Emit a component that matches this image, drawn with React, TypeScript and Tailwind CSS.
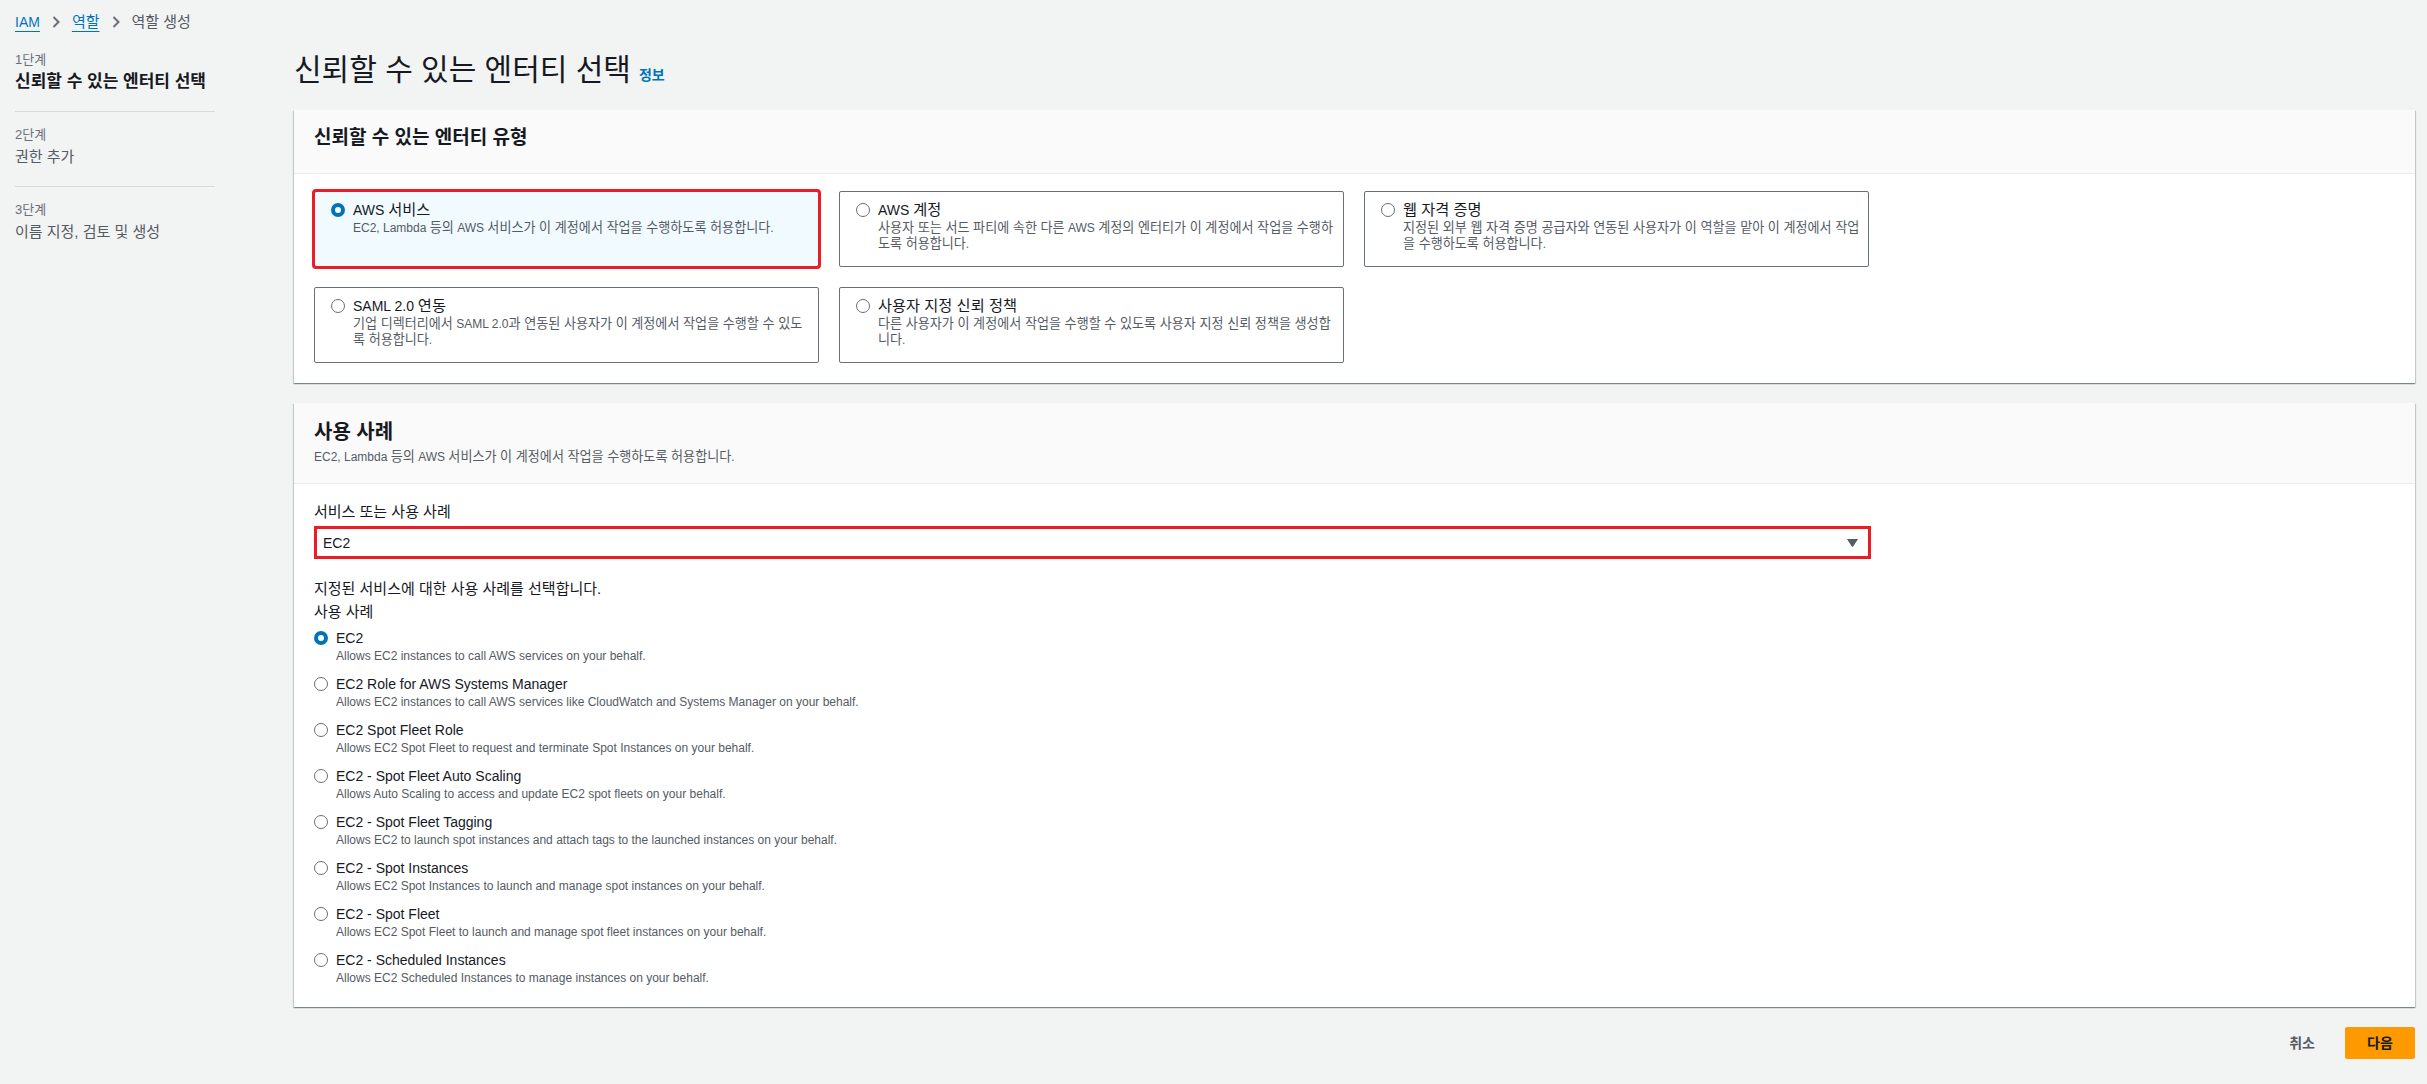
import React from 'react'

const tiles = [
  {
    title: 'AWS 서비스',
    lines: ['EC2, Lambda 등의 AWS 서비스가 이 계정에서 작업을 수행하도록 허용합니다.'],
    selected: true,
  },
  {
    title: 'AWS 계정',
    lines: [
      '사용자 또는 서드 파티에 속한 다른 AWS 계정의 엔터티가 이 계정에서 작업을 수행하',
      '도록 허용합니다.',
    ],
  },
  {
    title: '웹 자격 증명',
    lines: [
      '지정된 외부 웹 자격 증명 공급자와 연동된 사용자가 이 역할을 맡아 이 계정에서 작업',
      '을 수행하도록 허용합니다.',
    ],
  },
  {
    title: 'SAML 2.0 연동',
    lines: [
      '기업 디렉터리에서 SAML 2.0과 연동된 사용자가 이 계정에서 작업을 수행할 수 있도',
      '록 허용합니다.',
    ],
  },
  {
    title: '사용자 지정 신뢰 정책',
    lines: [
      '다른 사용자가 이 계정에서 작업을 수행할 수 있도록 사용자 지정 신뢰 정책을 생성합',
      '니다.',
    ],
  },
]

const useCases = [
  { title: 'EC2', desc: 'Allows EC2 instances to call AWS services on your behalf.' },
  {
    title: 'EC2 Role for AWS Systems Manager',
    desc: 'Allows EC2 instances to call AWS services like CloudWatch and Systems Manager on your behalf.',
  },
  {
    title: 'EC2 Spot Fleet Role',
    desc: 'Allows EC2 Spot Fleet to request and terminate Spot Instances on your behalf.',
  },
  {
    title: 'EC2 - Spot Fleet Auto Scaling',
    desc: 'Allows Auto Scaling to access and update EC2 spot fleets on your behalf.',
  },
  {
    title: 'EC2 - Spot Fleet Tagging',
    desc: 'Allows EC2 to launch spot instances and attach tags to the launched instances on your behalf.',
  },
  {
    title: 'EC2 - Spot Instances',
    desc: 'Allows EC2 Spot Instances to launch and manage spot instances on your behalf.',
  },
  {
    title: 'EC2 - Spot Fleet',
    desc: 'Allows EC2 Spot Fleet to launch and manage spot fleet instances on your behalf.',
  },
  {
    title: 'EC2 - Scheduled Instances',
    desc: 'Allows EC2 Scheduled Instances to manage instances on your behalf.',
  },
]

// hangul runs render a bit larger so they line up with the console font
function Ko({ text }: { text: string }) {
  const parts = text.split(/([\uAC00-\uD7A3]+(?:[ ,.]*[\uAC00-\uD7A3]+)*)/)
  return (
    <>
      {parts.map((p, i) =>
        /[\uAC00-\uD7A3]/.test(p) ? (
          <span key={i} className="text-[1.09em]">
            {p}
          </span>
        ) : (
          <React.Fragment key={i}>{p}</React.Fragment>
        ),
      )}
    </>
  )
}

function Radio({ checked }: { checked?: boolean }) {
  return checked ? (
    <span className="mt-[3px] box-border size-[14px] shrink-0 rounded-full border-[4px] border-[#0073bb] bg-white" />
  ) : (
    <span className="mt-[3px] box-border size-[14px] shrink-0 rounded-full border-[1.5px] border-[#687078] bg-white" />
  )
}

function Chevron() {
  return (
    <svg width="8" height="12" viewBox="0 0 8 12" className="mx-3">
      <polyline points="1.5,1 6.5,6 1.5,11" fill="none" stroke="#687078" strokeWidth="2" />
    </svg>
  )
}

const cardShadow =
  'shadow-[0_1px_1px_0_rgba(0,28,36,0.3),1px_1px_1px_0_rgba(0,28,36,0.15),-1px_1px_1px_0_rgba(0,28,36,0.15)]'

export default function App() {
  return (
    <div className="min-h-screen bg-[#f2f3f3] pl-[15px] pr-[12px] pt-3 pb-6 font-['Liberation_Sans','Noto_Sans_CJK_KR',sans-serif] text-[#16191f]">
      {/* breadcrumb */}
      <nav className="flex h-5 items-center text-[14px] leading-5">
        <span className="text-[#0073bb] underline underline-offset-4">IAM</span>
        <Chevron />
        <span className="text-[15px] text-[#0073bb] underline underline-offset-4">역할</span>
        <Chevron />
        <span className="text-[15px] text-[#545b64]">역할 생성</span>
      </nav>

      <div className="mt-5 flex">
        {/* steps */}
        <aside className="w-[200px] shrink-0">
          <div>
            <div className="text-[13px] leading-4 text-[#687078]">1단계</div>
            <div className="mt-1 text-[17px] font-bold leading-5">신뢰할 수 있는 엔터티 선택</div>
          </div>
          <div className="mt-[19px] mb-[15px] border-t border-[#d5dbdb]" />
          <div>
            <div className="text-[13px] leading-4 text-[#687078]">2단계</div>
            <div className="mt-1 text-[15px] leading-5 text-[#545b64]">권한 추가</div>
          </div>
          <div className="mt-[19px] mb-[15px] border-t border-[#d5dbdb]" />
          <div>
            <div className="text-[13px] leading-4 text-[#687078]">3단계</div>
            <div className="mt-1 text-[15px] leading-5 text-[#545b64]">이름 지정, 검토 및 생성</div>
          </div>
        </aside>

        <main className="ml-[79px] flex-1">
          <h1 className="flex h-9 items-baseline text-[30px] leading-9 font-normal">
            신뢰할 수 있는 엔터티 선택
            <span className="ml-2 text-[14px] font-bold text-[#0073bb]">정보</span>
          </h1>

          {/* trusted entity type */}
          <section className={`mt-[22px] bg-white ${cardShadow}`}>
            <div className="border-b border-[#eaeded] bg-[#fafafa] px-5 pt-4 pb-[23px]">
              <h2 className="text-[19px] font-bold leading-6">신뢰할 수 있는 엔터티 유형</h2>
            </div>
            <div className="grid grid-cols-[repeat(3,505px)] gap-5 px-5 pt-[17px] pb-5">
              {tiles.map((t) => (
                <div
                  key={t.title}
                  className={
                    t.selected
                      ? 'flex h-[76px] gap-2 rounded-[2px] border border-[#0073bb] bg-[#f1faff] px-4 pt-2 outline-solid outline-[3px] outline-[#ed1c24] outline-offset-[-1px]'
                      : 'flex h-[76px] gap-2 rounded-[2px] border border-[#687078] bg-white px-4 pt-2'
                  }
                >
                  <Radio checked={t.selected} />
                  <div>
                    <div className="text-[14px] leading-5">
                      <Ko text={t.title} />
                    </div>
                    {t.lines.map((l) => (
                      <div key={l} className="whitespace-nowrap text-[12px] leading-4 text-[#545b64]">
                        <Ko text={l} />
                      </div>
                    ))}
                  </div>
                </div>
              ))}
            </div>
          </section>

          {/* use case */}
          <section className={`mt-5 bg-white ${cardShadow}`}>
            <div className="border-b border-[#eaeded] bg-[#fafafa] px-5 pt-[17px] pb-[18px]">
              <h2 className="text-[20px] font-bold leading-6">사용 사례</h2>
              <p className="mt-[5px] text-[12px] leading-4 text-[#545b64]">
                <Ko text="EC2, Lambda 등의 AWS 서비스가 이 계정에서 작업을 수행하도록 허용합니다." />
              </p>
            </div>
            <div className="px-5 pt-[18px] pb-[21px]">
              <div className="text-[15px] leading-5">서비스 또는 사용 사례</div>
              <div className="mt-1 flex h-[33px] w-[1557px] items-center justify-between border-[3px] border-[#ed1c24] bg-white pl-[6px] pr-[10px]">
                <span className="text-[14px] leading-5">EC2</span>
                <svg width="11" height="8" viewBox="0 0 11 8">
                  <path d="M0 0h11L6.2 7.4a.8.8 0 0 1-1.4 0z" fill="#545b64" />
                </svg>
              </div>

              <div className="mt-5 text-[15px] leading-5">지정된 서비스에 대한 사용 사례를 선택합니다.</div>
              <div className="mt-[3px] text-[15px] leading-5">사용 사례</div>

              <div className="mt-[6px] flex flex-col gap-[10px]">
                {useCases.map((u, i) => (
                  <div key={u.title} className="flex gap-2">
                    <Radio checked={i === 0} />
                    <div>
                      <div className="text-[14px] leading-5">{u.title}</div>
                      <div className="text-[12px] leading-4 text-[#545b64]">{u.desc}</div>
                    </div>
                  </div>
                ))}
              </div>
            </div>
          </section>

          <div className="mt-5 flex items-center justify-end">
            <button className="mr-[30px] text-[14px] font-bold leading-5 text-[#545b64]">취소</button>
            <button className="h-8 w-[70px] rounded-[2px] bg-[#ff9900] text-[14px] font-bold text-[#16191f]">
              다음
            </button>
          </div>
        </main>
      </div>
    </div>
  )
}
